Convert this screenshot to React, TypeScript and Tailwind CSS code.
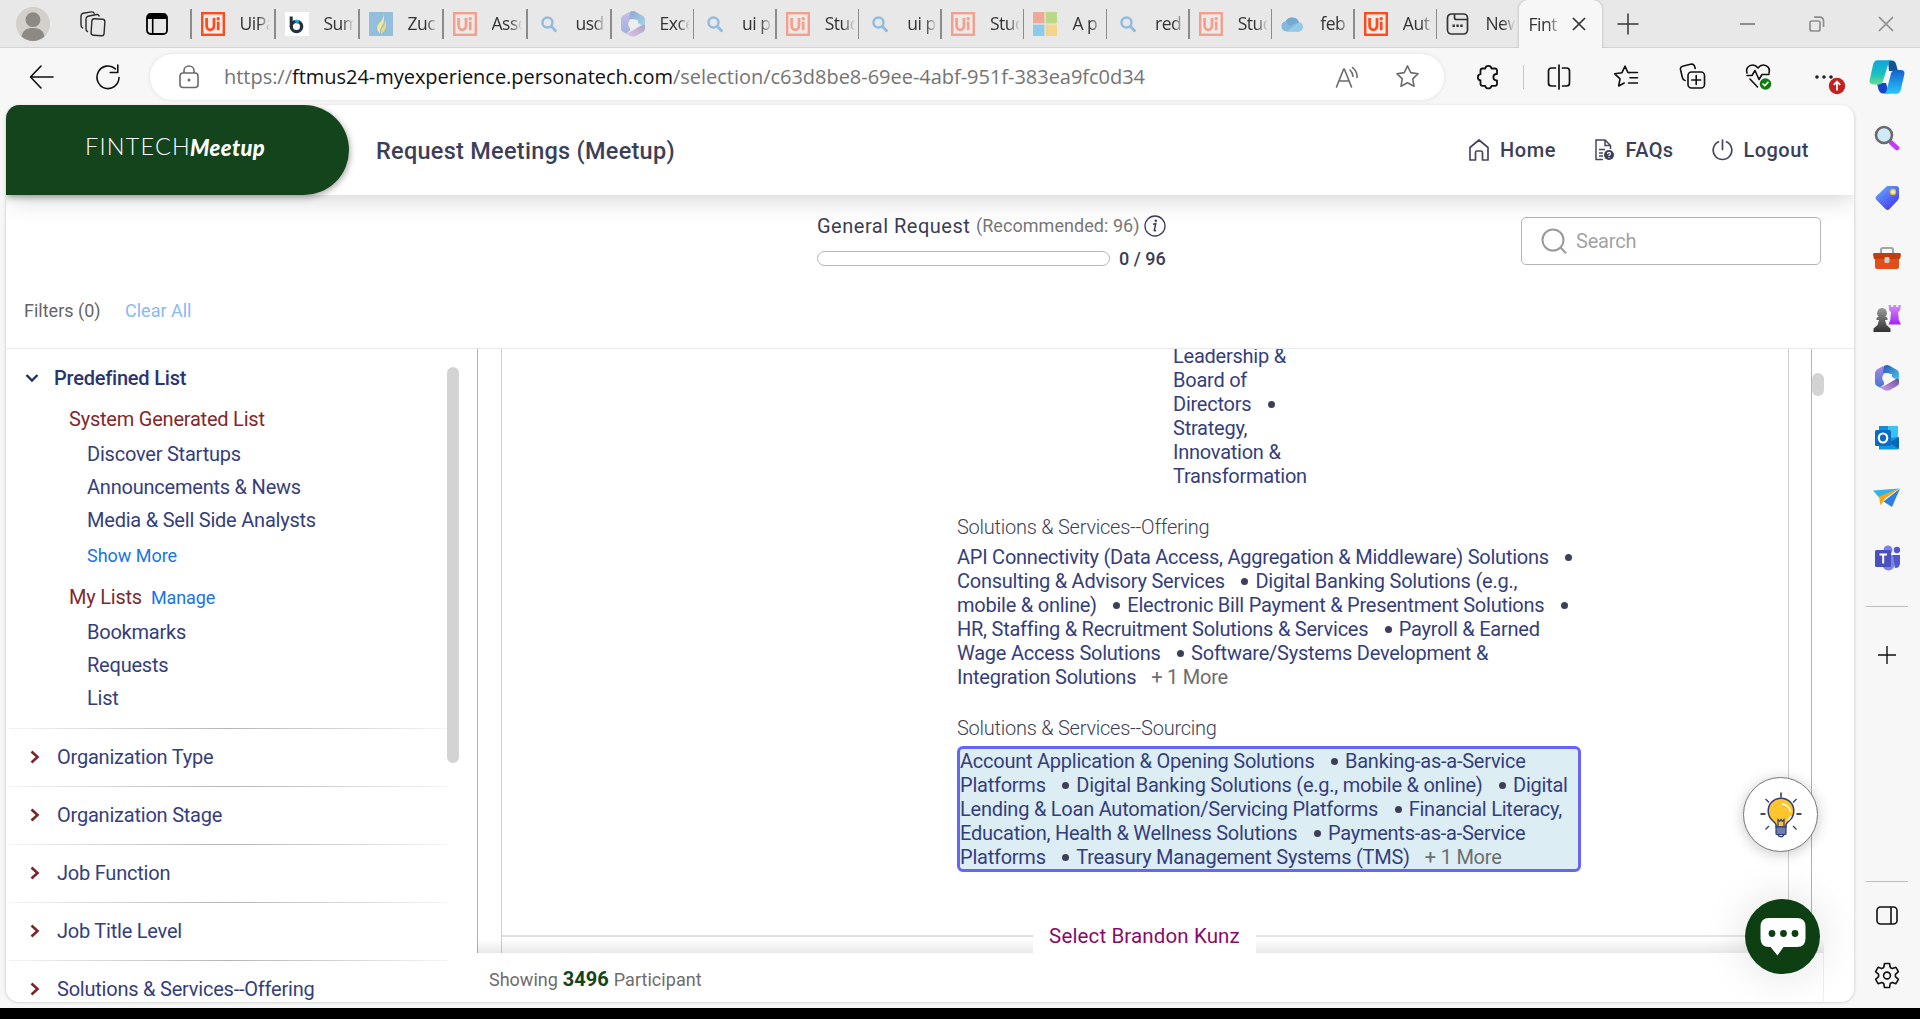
import React from "react";

/* ---------- Favicons ---------- */

function UiPath() {
  return (
    <svg width="24" height="24" viewBox="0 0 24 24">
      <rect width="24" height="24" fill="#ff4a1c" />
      <rect x="2.4" y="2.4" width="19.2" height="19.2" fill="#f3ece9" />
      <path d="M5.6 6v7.6c0 5.6 7.4 5.6 7.4 0V6" fill="none" stroke="#ff4a1c" strokeWidth="2.7" />
      <path d="M17.2 9.6v8.6" stroke="#ff4a1c" strokeWidth="2.7" />
      <circle cx="17.2" cy="6.7" r="1.7" fill="#ff4a1c" />
    </svg>
  );
}

function SumIcon() {
  return (
    <svg width="24" height="24" viewBox="0 0 24 24">
      <rect width="24" height="24" fill="#fff" />
      <path d="M6.2 4.500v10" stroke="#25303f" strokeWidth="3" />
      <circle cx="11.500" cy="14.500" r="5.200" fill="none" stroke="#25303f" strokeWidth="3.300" />
      <path d="M9.500 8h5l-1.500 3.500h-2z" fill="#18a6dd" />
    </svg>
  );
}

function Flame() {
  return (
    <svg width="24" height="24" viewBox="0 0 24 24">
      <rect width="24" height="24" fill="#93bfdc" />
      <path d="M13.500 1.500c1.500 3 .5 6-2.500 9s-4.500 6 0 11c-.5-4 1-6 2.500-8.500s2.500-7.500 0-11.500z" fill="#f7e796" />
      <path d="M15.500 6.500c1 3 .5 5-1 7.500s-2.500 4.500-2.500 8c3.500-2.500 5-5.500 5-8.500 0-2.700-.5-5-1.500-7z" fill="#f5d96f" />
    </svg>
  );
}

function BlueSearch() {
  return (
    <svg width="24" height="24" viewBox="0 0 24 24" fill="none" stroke="#8fbce0" strokeLinecap="round">
      <circle cx="10.500" cy="10.500" r="5" strokeWidth="2.400" />
      <path d="M14.500 14.500l4 4.300" strokeWidth="2.800" />
    </svg>
  );
}

function M365({ id }: { id: string }) {
  return (
    <svg width="26" height="28" viewBox="0 0 26 28">
      <defs>
        <linearGradient id={id + "a"} x1="0" y1="0" x2="0" y2="1">
          <stop offset="0" stopColor="#a987dd" />
          <stop offset="1" stopColor="#3f79d8" />
        </linearGradient>
        <linearGradient id={id + "b"} x1="0" y1="0" x2="1" y2="1">
          <stop offset="0" stopColor="#2a55b5" />
          <stop offset="1" stopColor="#4cc8f0" />
        </linearGradient>
        <linearGradient id={id + "c"} x1="0" y1="1" x2="1" y2="0">
          <stop offset="0" stopColor="#d5a3f3" />
          <stop offset="1" stopColor="#6b4a9c" />
        </linearGradient>
      </defs>
      <path d="M9 2L3 5.500Q1 7 1 9v10q0 2 2 3l3 1.500 4-3V3z" fill={`url(#${id}a)`} />
      <path d="M10 2q3-2 6 0l7 4q2 1 2 3.500V17l-7-4V10l-9-1z" fill={`url(#${id}b)`} />
      <path d="M25 15.500v3.500q0 2-2 3l-7 4q-3 1.600-6 0L4 22.500q4 1 7-1l12-7z" fill={`url(#${id}c)`} />
      <circle cx="13" cy="14" r="4.800" fill="#f7f7f7" />
    </svg>
  );
}

function Microsoft() {
  return (
    <svg width="24" height="24" viewBox="0 0 24 24">
      <rect width="11.400" height="11.400" fill="#efa998" />
      <rect x="12.600" width="11.400" height="11.400" fill="#bdd885" />
      <rect y="12.600" width="11.400" height="11.400" fill="#8bcbec" />
      <rect x="12.600" y="12.600" width="11.400" height="11.400" fill="#f4d58a" />
    </svg>
  );
}

function Cloud() {
  return (
    <svg width="26" height="24" viewBox="0 0 26 24">
      <path d="M6 20a5.500 5.500 0 0 1-1-10.900A8 8 0 0 1 19.500 10a5.200 5.200 0 0 1 .5 10z" fill="#84b9dd" />
      <path d="M5 9.200A8 8 0 0 1 19.500 10L9 14z" fill="#74a9d3" />
      <path d="M6 20L19.500 10a5.200 5.200 0 0 1 .5 10z" fill="#93cae9" />
    </svg>
  );
}

function NewTabIcon() {
  return (
    <svg width="24" height="24" viewBox="0 0 24 24" fill="none" stroke="#333" strokeWidth="1.700">
      <rect x="1.500" y="2" width="20" height="20" rx="4" />
      <path d="M8.500 2v3.500q0 2 2 2h11" />
      <path d="M6.500 13.800h2.400M10.400 13.800h2.400M14.300 13.800h2.400" strokeWidth="2.600" />
    </svg>
  );
}

/* ---------- Tabs ---------- */

const dim = (n: React.ReactNode) => <span className="block opacity-45">{n}</span>;

const tabs: { label: string; icon: React.ReactNode; wide?: boolean }[] = [
  { label: "UiPa", icon: <UiPath />, wide: true },
  { label: "Sum", icon: <SumIcon />, wide: true },
  { label: "Zuc", icon: <Flame />, wide: true },
  { label: "Asso", icon: dim(<UiPath />), wide: true },
  { label: "usd", icon: <BlueSearch />, wide: true },
  { label: "Exce", icon: dim(<M365 id="tab" />) },
  { label: "ui p", icon: <BlueSearch /> },
  { label: "Stud", icon: dim(<UiPath />) },
  { label: "ui p", icon: <BlueSearch /> },
  { label: "Stud", icon: dim(<UiPath />) },
  { label: "A p", icon: <Microsoft /> },
  { label: "red", icon: <BlueSearch /> },
  { label: "Stud", icon: dim(<UiPath />) },
  { label: "feb", icon: <Cloud /> },
  { label: "Aut", icon: <UiPath /> },
  { label: "New", icon: <NewTabIcon /> },
];

function Fade({ children }: { children: React.ReactNode }) {
  return (
    <span className="block overflow-hidden whitespace-nowrap text-[17.5px] leading-[24px] tracking-[-0.5px] text-[#333] [mask-image:linear-gradient(to_right,black_60%,transparent)]">
      {children}
    </span>
  );
}

function TabBar() {
  return (
    <div className="flex h-12 border-b border-[#d2d2d2] bg-[#e8e8e8]">
      <div className="flex w-[190px] shrink-0 items-center">
        <svg className="ml-4" width="34" height="34" viewBox="0 0 34 34">
          <circle cx="17" cy="17" r="17" fill="#d3d0cc" />
          <circle cx="17" cy="12.700" r="7.400" fill="#8d8a86" />
          <path d="M5.500 29.500c1-6 5-8.500 11.500-8.500s10.500 2.500 11.500 8.500a17 17 0 0 1-23 0z" fill="#8d8a86" />
        </svg>
        <svg className="ml-[30px]" width="26" height="26" viewBox="0 0 26 26" fill="none" stroke="#2b2b2b" strokeWidth="1.400" strokeLinejoin="round" strokeLinecap="round">
          <rect x="11.500" y="8" width="13" height="16.500" rx="2.500" transform="rotate(4 18 16)" />
          <path d="M7.500 20.500q-1.500-.6-1.500-2.500V8q0-2.200 2-2.700l8.500-1.800q2-.3 2.600 1.500" />
          <path d="M2.600 17Q1 16 1 14V5q0-2.200 2-2.700L11.600.900q2-.2 2.600 1.300" />
        </svg>
        <svg className="ml-[40px]" width="22" height="22" viewBox="0 0 22 22">
          <rect x="1" y="1" width="20" height="20" rx="3.500" fill="none" stroke="#000" strokeWidth="1.800" />
          <path d="M1 6V4.500Q1 1 4.500 1h13Q21 1 21 4.500V6z" fill="#000" />
          <path d="M6.700 6v15" stroke="#000" strokeWidth="1.600" />
        </svg>
      </div>
      {tabs.map((t, i) => (
        <div key={i} className={`flex shrink-0 items-center ${t.wide ? "w-[84px]" : "w-[82.6px]"}`}>
          <div className="h-[30px] w-[1.5px] shrink-0 bg-[#8c8c8c]" />
          <div className="ml-[9px] flex w-6 shrink-0 justify-center">{t.icon}</div>
          <div className="mb-px ml-[15px] w-[30px] overflow-hidden">
            <Fade>{t.label}</Fade>
          </div>
        </div>
      ))}
      <div className="-mb-px flex w-[83px] shrink-0 items-center rounded-t-[9px] bg-[#f7f7f7] pl-[10px] shadow-[0_0_3px_rgba(0,0,0,0.25)] [clip-path:inset(0_-4px_0_-4px)]">
        <div className="mb-px w-[32px] overflow-hidden">
          <Fade>Fint</Fade>
        </div>
        <svg className="ml-[11px]" width="14" height="14" viewBox="0 0 14 14" stroke="#333" strokeWidth="1.700">
          <path d="M1 1l12 12M13 1L1 13" />
        </svg>
      </div>
      <div className="flex flex-1 items-center">
        <svg className="ml-[15px]" width="22" height="22" viewBox="0 0 22 22" stroke="#333" strokeWidth="1.500">
          <path d="M11 .5v21M.5 11h21" />
        </svg>
        <div className="ml-[101px] h-[2px] w-[15px] bg-[#8d8d8d]" />
        <svg className="ml-[54px]" width="16" height="16" viewBox="0 0 16 16" fill="none" stroke="#8d8d8d" strokeWidth="1.700">
          <rect x="1" y="5" width="10" height="10" rx="2" />
          <path d="M5 1.200h5.500q4 0 4 4V11" />
        </svg>
        <svg className="ml-[53px]" width="16" height="16" viewBox="0 0 16 16" stroke="#8d8d8d" strokeWidth="1.700">
          <path d="M1 1l14 14M15 1L1 15" />
        </svg>
      </div>
    </div>
  );
}

/* ---------- Toolbar ---------- */

function Cell({ w, children }: { w: string; children: React.ReactNode }) {
  return <div className={`flex shrink-0 items-center justify-center ${w}`}>{children}</div>;
}

const line = {
  fill: "none",
  stroke: "#111",
  strokeWidth: 1.6,
  strokeLinecap: "round" as const,
  strokeLinejoin: "round" as const,
};

const STAR = "M12 1.800l3.100 6.500 7.100 1-5.200 5 1.300 7.100L12 18l-6.300 3.400L7 14.300l-5.200-5 7.100-1z";

function Toolbar() {
  return (
    <div className="flex h-[57px] items-center bg-[#f7f7f7]">
      <div className="flex w-[150px] shrink-0">
        <svg className="ml-[29px]" width="26" height="26" viewBox="0 0 26 26" {...line}>
          <path d="M1.500 13H24M12 2L1.500 13 12 24" />
        </svg>
        <svg className="ml-[40px]" width="26" height="26" viewBox="0 0 26 26" {...line}>
          <path d="M24 13.500a11 11.300 0 1 1-3.600-8.600M22.800 1v7.500h-7.600" />
        </svg>
      </div>
      <div className="flex h-[46px] w-[1294px] shrink-0 items-center rounded-full bg-white shadow-[0_0_5px_rgba(0,0,0,0.09)]">
        <svg className="ml-[29px]" width="20" height="24" viewBox="0 0 20 24" fill="none" stroke="#6a6a6a" strokeWidth="1.600">
          <rect x="1" y="8" width="18" height="14.500" rx="3" />
          <path d="M5 8V5.500a5 4.500 0 0 1 10 0V8" />
          <circle cx="10" cy="15" r="1.500" fill="#6a6a6a" stroke="none" />
        </svg>
        <div className="ml-[25px] w-[940px] shrink-0 whitespace-nowrap text-[20px] leading-[28px] tracking-[-0.03px] text-[#747474]">
          https://<span className="text-[#111]">ftmus24-myexperience.personatech.com</span>/selection/c63d8be8-69ee-4abf-951f-383ea9fc0d34
        </div>
        <svg className="ml-[171px] shrink-0" width="25" height="24" viewBox="0 0 25 24" {...line} stroke="#6a6a6a">
          <path d="M1.500 22L8.700 4h.6l7.200 18M4 16h10M15 5q3 3 3 6.500M17.500 2.500q5 4 4.500 10" />
        </svg>
        <svg className="ml-[35px] shrink-0" width="25" height="25" viewBox="0 0 24 24" {...line} stroke="#6a6a6a" strokeWidth={1.5}>
          <path d={STAR} />
        </svg>
      </div>
      <Cell w="w-[86px]">
        <svg className="ml-[3px]" width="24" height="26" viewBox="0 0 24 26" {...line} strokeWidth={1.8}>
          <path d="M5.500 4.500h2.700a3.200 3.200 0 0 1 6.300 0h3.500q2 0 2 2v3.500h-1a3.200 3.200 0 0 0 0 6.300h1v3.500q0 2-2 2h-3.500a3.200 3.200 0 0 1-6.300 0H5.500q-2 0-2-2v-3.300a3.200 3.200 0 0 1 0-6.300V6.500q0-2 2-2z" />
        </svg>
      </Cell>
      <div className="-ml-[7px] h-6 w-px shrink-0 bg-[#c8c8c8]" />
      <Cell w="w-[70px]">
        <svg width="24" height="26" viewBox="0 0 24 26" {...line} strokeWidth={1.7}>
          <path d="M8.500 4H4.500Q1.500 4 1.500 7v12q0 3 3 3h4M15.500 4h4q3 0 3 3v12q0 3-3 3h-4M12 1v24" />
        </svg>
      </Cell>
      <Cell w="w-[64px]">
        <svg width="26" height="25" viewBox="0 0 26 25" {...line}>
          <path d="M16.500 8.700L14.900 8.500 12 2.200 8.900 8.800l-7.100 1 5.200 5L5.700 22l5.500-3M15.500 8.500h9M17 13.800h7.500M15.500 19h9" />
        </svg>
      </Cell>
      <Cell w="w-[68px]">
        <svg width="27" height="27" viewBox="0 0 27 27" {...line}>
          <rect x="9" y="9" width="16.500" height="16" rx="3.500" />
          <path d="M17.200 12.500v9M12.700 17h9M6 17.500Q4 17 3.500 15L1.500 6.500Q1 4 3.500 3.300l8-2Q14.500.600 15.500 3l.7 2.500" />
        </svg>
      </Cell>
      <Cell w="w-[64px]">
        <svg className="ml-0.5" width="28" height="27" viewBox="0 0 28 27" {...line}>
          <path d="M2 10C0 3 8.500-1 13 5c4.500-6 13-2 11 5M2 12.500h5l3-5 4 9 3-5h7M5 16l7.500 8" />
          <circle cx="20.500" cy="21" r="5.800" fill="#107c10" stroke="none" />
          <path d="M18 21l1.800 1.800 3.200-3.500" stroke="#fff" />
        </svg>
      </Cell>
      <Cell w="w-[70px]">
        <svg className="mt-[14px] ml-[9px]" width="32" height="32" viewBox="0 0 32 32">
          <circle cx="3" cy="9" r="1.800" fill="#222" />
          <circle cx="10" cy="9" r="1.800" fill="#222" />
          <circle cx="17" cy="9" r="1.800" fill="#222" />
          <circle cx="23" cy="18" r="8.200" fill="#c42020" />
          <path d="M23 22.500v-8.500M19.800 16.800l3.200-3.200 3.200 3.200" stroke="#fff" strokeWidth="1.800" fill="none" />
        </svg>
      </Cell>
      <div className="flex flex-1 justify-center pr-[6px]">
        <svg width="36" height="34" viewBox="0 0 36 34">
          <defs>
            <linearGradient id="cpa" x1="0" y1="0" x2="0" y2="1">
              <stop offset="0" stopColor="#12a5dc" />
              <stop offset=".55" stopColor="#16bfc2" />
              <stop offset="1" stopColor="#67dd8a" />
            </linearGradient>
            <linearGradient id="cpb" x1="0" y1="0" x2="0" y2="1">
              <stop offset="0" stopColor="#1760d0" />
              <stop offset="1" stopColor="#25c8f8" />
            </linearGradient>
          </defs>
          <path d="M19 .5h4q3 0 4 3.500l2 7h-9z" fill="#0e5795" />
          <path d="M8 23h9l3 10.500h-6q-3 0-4.500-4z" fill="#1546c8" />
          <path d="M8.500.300H23q-2.500 0-3.500 3L14 21q-1 3.500-4.500 3.500H4.500q-5 0-3.700-5L4 5q1-4.700 4.500-4.700z" fill="url(#cpa)" />
          <path d="M27.500 33.700H14q2.500 0 3.500-3L22 13.500q1-3.500 4.500-3.500h5q5 0 3.700 5L32 29q-1 4.700-4.500 4.700z" fill="url(#cpb)" />
        </svg>
      </div>
    </div>
  );
}

/* ---------- Page header ---------- */

function Header() {
  return (
    <div className="relative z-20 flex h-[90px] shrink-0 items-center bg-white font-medium text-[#3d3f58] shadow-[0_2px_26px_rgba(0,0,0,0.2)]">
      <div className="flex h-[90px] w-[343px] shrink-0 items-center rounded-r-[45px] bg-[#13441c] pb-[6px] pl-[79px] text-white shadow-[1px_2px_6px_rgba(0,0,0,0.35)]">
        <span className="font-['Lato'] text-[23.5px] font-light tracking-[1.2px]">FINTECH</span>
        <span className="-ml-px font-['Lato'] text-[22px] font-black italic tracking-[0.4px]">Meetup</span>
      </div>
      <h1 className="mt-[3px] ml-[27px] w-[1093px] shrink-0 whitespace-nowrap text-[23.5px] font-medium tracking-[0.27px]">Request Meetings (Meetup)</h1>
      <div className="flex w-[126px] shrink-0 items-center text-[20px]">
        <svg width="20" height="22" viewBox="0 0 20 22" fill="none" stroke="#45475f" strokeWidth="1.700" strokeLinejoin="round">
          <path d="M1 8.500L10 1l9 7.500V21h-5.500v-7.500q0-1.500-1.500-1.500H8q-1.500 0-1.500 1.500V21H1z" />
        </svg>
        <span className="ml-[11px] tracking-[0.6px]">Home</span>
      </div>
      <div className="flex w-[117px] shrink-0 items-center text-[20px]">
        <svg width="20" height="22" viewBox="0 0 20 22" fill="none" stroke="#45475f" strokeWidth="1.500">
          <path d="M8 20.500H1V1h9l5.500 5.500V10M10 1v5.500h5.500M4 10.500h6M4 14h4M4 17h4" />
          <circle cx="14" cy="16" r="5" fill="#3d3f58" stroke="none" />
          <path d="M12.500 15q0-1.600 1.500-1.600t1.500 1.400q0 .9-1.500 1.500v.700M14 18v1" stroke="#fff" strokeWidth="1.200" />
        </svg>
        <span className="ml-[10.5px] tracking-[0.4px]">FAQs</span>
      </div>
      <div className="flex shrink-0 items-center text-[20px]">
        <svg width="21" height="22" viewBox="0 0 21 22" fill="none" stroke="#45475f" strokeWidth="1.700" strokeLinecap="round">
          <path d="M6.500 2.800a9.300 9.300 0 1 0 8 0M10.500 1v9.500" />
        </svg>
        <span className="ml-[10.5px] tracking-[0.45px]">Logout</span>
      </div>
    </div>
  );
}

function RequestBar() {
  return (
    <div className="flex h-[154px] shrink-0 border-b border-[#e9e9e9]">
      <div className="flex w-[811px] shrink-0 items-end pb-[25px] pl-[18px] text-[18px] leading-6">
        <span className="w-[101px] text-[#666]">Filters (0)</span>
        <span className="text-[#8bb8f8]">Clear All</span>
      </div>
      <div className="w-[704px] shrink-0">
        <div className="mt-[19px] flex items-center leading-6">
          <span className="w-[159px] text-[20px] tracking-[0.5px] text-[#3a3c55]">General Request</span>
          <span className="w-[169px] whitespace-nowrap text-[18px] tracking-[0.05px] text-[#777]">(Recommended: 96)</span>
          <svg className="-ml-px" width="22" height="22" viewBox="0 0 22 22">
            <circle cx="11" cy="11" r="10" fill="none" stroke="#3a3c55" strokeWidth="1.300" />
            <path d="M9 9.300l2.700-.5-1.400 6.500q0 1 1.800.1" fill="none" stroke="#3a3c55" strokeWidth="1.500" />
            <circle cx="11.800" cy="5.800" r="1.200" fill="#3a3c55" />
          </svg>
        </div>
        <div className="mt-[8px] flex h-6 items-center">
          <div className="h-[15px] w-[293px] rounded-full border border-[#b4b8b0] bg-white" />
          <span className="ml-[9px] text-[18px] font-medium text-[#3a3c55]">0 / 96</span>
        </div>
      </div>
      <div className="mt-[22px] flex h-[48px] w-[300px] items-center rounded-[5px] border border-[#b5b5b5] bg-white pl-[19px]">
        <svg width="27" height="27" viewBox="0 0 27 27" fill="none" stroke="#9a9a9a" strokeWidth="2">
          <circle cx="12" cy="12" r="10.500" />
          <path d="M19.500 19.500l5.500 5.700" />
        </svg>
        <span className="ml-[8px] text-[20px] tracking-[-0.2px] text-[#a3a3a3]">Search</span>
      </div>
    </div>
  );
}

/* ---------- Filters ---------- */

function Sub({ children }: { children: React.ReactNode }) {
  return <div className="flex h-[33px] items-center pl-[81px]">{children}</div>;
}

function Filters() {
  return (
    <div className="flex w-[471px] shrink-0 overflow-hidden text-[20px] tracking-[-0.22px] text-[#353e7c]">
      <div className="w-[441px] shrink-0 whitespace-nowrap">
        <div className="flex h-[58px] items-center pl-[19px]">
          <svg width="14" height="10" viewBox="0 0 14 10" fill="none" stroke="#25306b" strokeWidth="2.400">
            <path d="M1.500 2L7 7.500 12.500 2" />
          </svg>
          <span className="ml-[15px] font-medium text-[#2a3470]">Predefined List</span>
        </div>
        <div className="h-6 pl-[63px] leading-6 text-[#80292c]">System Generated List</div>
        <div className="mt-[6.5px]">
          <Sub>Discover Startups</Sub>
          <Sub>Announcements &amp; News</Sub>
          <Sub>Media &amp; Sell Side Analysts</Sub>
        </div>
        <div className="flex h-9 items-center pt-[2px] pl-[81px] text-[18px] tracking-[-0.02px] text-[#1a73e8]">Show More</div>
        <div className="mt-[6px] flex h-[37px] items-center pl-[63px]">
          <span className="text-[#80292c]">My Lists</span>
          <span className="mt-px ml-[9px] text-[18px] tracking-[-0.1px] text-[#1a73e8]">Manage</span>
        </div>
        <Sub>Bookmarks</Sub>
        <Sub>Requests</Sub>
        <Sub>List</Sub>
        <div className="h-[13.5px]" />
        {["Organization Type", "Organization Stage", "Job Function", "Job Title Level", "Solutions & Services--Offering"].map((t) => (
          <div key={t}>
            <div className="ml-[3px] h-px bg-linear-to-r from-[#f4f4f4] via-[#b5b5b5] to-[#f4f4f4]" />
            <div className="flex h-[57px] items-center pb-[2px] pl-[24px]">
              <svg width="10" height="14" viewBox="0 0 10 14" fill="none" stroke="#7c2427" strokeWidth="2.600">
                <path d="M1.500 1.500L7.500 7l-6 5.500" />
              </svg>
              <span className="ml-[17px]">{t}</span>
            </div>
          </div>
        ))}
      </div>
      <div className="mt-[18px] h-[396px] w-3 rounded-full bg-[#d3d3d3]" />
    </div>
  );
}

/* ---------- Participant card ---------- */

const offering: string[][] = [
  ["API Connectivity (Data Access, Aggregation & Middleware) Solutions", ""],
  ["Consulting & Advisory Services", "Digital Banking Solutions (e.g.,"],
  ["mobile & online)", "Electronic Bill Payment & Presentment Solutions", ""],
  ["HR, Staffing & Recruitment Solutions & Services", "Payroll & Earned"],
  ["Wage Access Solutions", "Software/Systems Development &"],
  ["Integration Solutions"],
];

const sourcing: string[][] = [
  ["Account Application & Opening Solutions", "Banking-as-a-Service"],
  ["Platforms", "Digital Banking Solutions (e.g., mobile & online)", "Digital"],
  ["Lending & Loan Automation/Servicing Platforms", "Financial Literacy,"],
  ["Education, Health & Wellness Solutions", "Payments-as-a-Service"],
  ["Platforms", "Treasury Management Systems (TMS)"],
];

function Lines({ rows }: { rows: string[][] }) {
  return (
    <div className="whitespace-nowrap leading-6">
      {rows.map((r, i) => (
        <div key={i} className="flex h-6">
          {r.map((s, j) => (
            <React.Fragment key={j}>
              {j > 0 && (
                <span className="flex w-[30.5px] shrink-0 items-center pl-[16.5px]">
                  <span className="size-[7px] shrink-0 rounded-full bg-[#3d3f58]" />
                </span>
              )}
              {s && <span>{s}</span>}
            </React.Fragment>
          ))}
          {i === rows.length - 1 && <span className="ml-[15px] text-[#6d6d6d]">+ 1 More</span>}
        </div>
      ))}
    </div>
  );
}

function Participants() {
  return (
    <div className="relative flex h-[604px] shrink-0 overflow-hidden">
      <div className="w-px shrink-0 bg-[#7cc4ee]" />
      <div className="ml-[23px] w-[1288px] shrink-0 border-x border-[#cfcfcf]">
        <div className="-mt-[5px] ml-[455px] w-[624px] text-[20px] tracking-[-0.24px] text-[#353e7c]">
          <div className="ml-[216px] whitespace-nowrap leading-6">
            <div>Leadership &amp;</div>
            <div>Board of</div>
            <div className="flex items-center">
              Directors
              <span className="ml-[17px] size-[7px] rounded-full bg-[#3d3f58]" />
            </div>
            <div>Strategy,</div>
            <div>Innovation &amp;</div>
            <div>Transformation</div>
          </div>
          <div className="mt-[27px] mb-[6px] h-6 font-light leading-6 text-[#3d3f58]">Solutions &amp; Services--Offering</div>
          <Lines rows={offering} />
          <div className="mt-[27px] mb-[6px] h-6 font-light leading-6 text-[#3d3f58]">Solutions &amp; Services--Sourcing</div>
          <div className="rounded-[6px] border-3 border-[#6466f8] bg-[#dcedf4]">
            <Lines rows={sourcing} />
          </div>
        </div>
        <div className="mt-[52px] flex h-10 items-start">
          <div className="mt-[11px] h-[2px] w-[531px] bg-[#e0e0e0]" />
          <div className="relative z-10 flex h-10 w-[223px] justify-center bg-white text-[20.5px] leading-6 tracking-[0.13px] text-[#8a0a68]">Select Brandon Kunz</div>
          <div className="mt-[11px] h-[2px] flex-1 bg-[#e6e6e6]" />
        </div>
      </div>
      <div className="ml-[22px] w-px shrink-0 bg-[#7cc4ee]" />
      <div className="mt-[24px] h-[23px] w-3 rounded-full bg-[#d3d3d3]" />
      <div className="absolute bottom-0 left-0 h-[14px] w-[1347px] bg-linear-to-t from-black/9 to-transparent" />
    </div>
  );
}

/* ---------- Edge sidebar ---------- */

const sideIcons: React.ReactNode[] = [
  <svg key="s" width="26" height="26" viewBox="0 0 26 26">
    <path d="M17 17.500l6 5.500" stroke="#c03cf8" strokeWidth="4.600" strokeLinecap="round" />
    <circle cx="10" cy="10" r="8" fill="#d0e9f8" stroke="#6a6a6a" strokeWidth="2.600" />
  </svg>,
  <svg key="t" width="26" height="26" viewBox="0 0 26 26">
    <defs>
      <linearGradient id="tag" x1="0" y1="0" x2=".8" y2="1">
        <stop offset="0" stopColor="#6bb4fb" />
        <stop offset="1" stopColor="#4232f2" />
      </linearGradient>
    </defs>
    <path d="M13 1h9q3 0 3 3v8q0 2-1.500 3.500l-8 8.500q-2 2-4 0l-9-9q-2-2 0-4z" fill="url(#tag)" />
    <circle cx="19" cy="7" r="2.400" fill="#fff" stroke="#f0c42a" strokeWidth="1.600" />
  </svg>,
  <svg key="b" width="28" height="26" viewBox="0 0 28 26">
    <path d="M8 9V5q0-2 2-2h8q2 0 2 2v4" fill="none" stroke="#a5a5a5" strokeWidth="2.200" />
    <rect x="2" y="10" width="24" height="14" rx="2" fill="#de4f1c" />
    <path d="M1.500 8h25q1.500 0 1.500 1.500L27 14H1L0 9.500Q0 8 1.500 8z" fill="#c53b10" />
    <rect x="11.500" y="12" width="5" height="6" rx="1.500" fill="#cdcdcd" />
  </svg>,
  <svg key="c" width="28" height="28" viewBox="0 0 28 28">
    <defs>
      <linearGradient id="rook" x1="0" y1="0" x2="0" y2="1">
        <stop offset="0" stopColor="#d68bff" />
        <stop offset="1" stopColor="#a224f4" />
      </linearGradient>
      <linearGradient id="pawn" x1="0" y1="0" x2="0" y2="1">
        <stop offset="0" stopColor="#9a9a9a" />
        <stop offset="1" stopColor="#303030" />
      </linearGradient>
    </defs>
    <path d="M15.500 1h2.500v2h2.200V1h3v2h2.200V1H28l-1 5.500-1.800 1.500.6 8 2.200 4.500H15.500l1.800-4.500.7-8-1.700-1.500z" fill="url(#rook)" />
    <path d="M9 4a5 5 0 0 1 3.300 8.600L14.500 14v2H12l1.500 5 4 3.500V28H.500v-3.500l4-3.500L6 16H3.500v-2l2.200-1.400A5 5 0 0 1 9 4z" fill="url(#pawn)" />
  </svg>,
  <M365 key="m" id="side" />,
  <svg key="o" width="26" height="26" viewBox="0 0 26 26">
    <rect x="5" y="1" width="19" height="16" fill="#37c4f5" />
    <path d="M5 1h9v7H5z" fill="#1b8ad6" />
    <path d="M24.500 12v12.500H5V14z" fill="#1493df" />
    <path d="M15 17.500l10-5.500v12z" fill="#0d66b5" />
    <rect x="1" y="5" width="16" height="16" rx="1.500" fill="#0b6cc4" />
    <ellipse cx="9" cy="13" rx="4.200" ry="4.500" fill="none" stroke="#fff" strokeWidth="2.200" />
  </svg>,
  <svg key="p" width="28" height="22" viewBox="0 0 28 22">
    <path d="M0 3.500L26.500 1.500 6 10.500z" fill="#35b2ea" />
    <path d="M27 1.500L19 20l-8.500-5.500z" fill="#2c7fe6" />
    <path d="M26.500 1.500L6 9.500l1.500 9L12 11.500z" fill="#f4a613" />
  </svg>,
  <svg key="w" width="26" height="26" viewBox="0 0 26 26">
    <circle cx="14" cy="5" r="4.500" fill="#7b83eb" />
    <circle cx="23" cy="5" r="3.200" fill="#5059c9" />
    <path d="M8 10h13v9a6.500 6.500 0 0 1-13 0z" fill="#7b83eb" />
    <path d="M19 10h7v8q0 5-5 5z" fill="#5059c9" />
    <rect x="1" y="5" width="16" height="17" rx="1.500" fill="#4a50bd" />
    <path d="M5.500 9.500h7.500M9.200 9.500v9" stroke="#fff" strokeWidth="2" />
  </svg>,
];

function EdgeSidebar() {
  return (
    <div className="flex w-[65px] shrink-0 flex-col items-center bg-[#f7f7f7] pt-[3px] pr-[2px]">
      {sideIcons.map((n, i) => (
        <div key={i} className="flex h-[60px] shrink-0 items-center justify-center">
          {n}
        </div>
      ))}
      <div className="mt-[18px] h-px w-[42px] shrink-0 bg-[#bdbdbd]" />
      <svg className="mt-[39px] shrink-0" width="18" height="18" viewBox="0 0 18 18" stroke="#111" strokeWidth="1.400">
        <path d="M9 0v18M0 9h18" />
      </svg>
      <div className="mt-[217px] h-px w-[42px] shrink-0 bg-[#bdbdbd]" />
      <svg className="mt-[24px] shrink-0" width="22" height="19" viewBox="0 0 22 19" fill="none" stroke="#111" strokeWidth="1.600">
        <rect x="1" y="1" width="20" height="17" rx="3.500" />
        <path d="M15 1v17" />
      </svg>
      <svg className="mt-[37px] shrink-0" width="26" height="27" viewBox="0 0 26 27" fill="none" stroke="#111" strokeWidth="1.600" strokeLinejoin="round">
        <path d="M10.500 1.500h5l.8 4 1.900 1.100 3.700-1.300 2.500 4.400-3 2.700v2.200l3 2.700-2.500 4.400-3.700-1.300-1.900 1.100-.8 4h-5l-.8-4-1.900-1.100-3.700 1.300-2.500-4.400 3-2.700v-2.200l-3-2.700 2.500-4.400 3.700 1.300 1.900-1.100z" />
        <circle cx="13" cy="13.500" r="3.400" />
      </svg>
    </div>
  );
}

/* ---------- Floating buttons ---------- */

function Bulb() {
  return (
    <svg width="42" height="46" viewBox="0 0 42 46" fill="none">
      <path d="M21 .5v5M.5 22h5M36.500 22h5" stroke="#111" strokeWidth="1.300" />
      <path d="M5.500 7l3.500 3.500M36.500 7L33 10.500M5.500 37.500L9 34M36.500 37.500L33 34" stroke="#2e3a7c" strokeWidth="1.300" />
      <path d="M16 35v-2.500q-1-2-3.500-4a12.800 12.800 0 1 1 17 0q-2.500 2-3.500 4V35z" fill="#fec52e" stroke="#2e3a7c" strokeWidth="1.500" />
      <path d="M22 12a9.500 9.500 0 0 1 8.500 8M31 24q-1 3-3.500 4.500" stroke="#fff" strokeWidth="1.400" />
      <path d="M18 35v-7.500l1.800 1.800 1.200-2 1.200 2 1.800-1.800V35" stroke="#2e3a7c" strokeWidth="1.200" />
      <rect x="16" y="35" width="10" height="7.500" rx="1" fill="#6d7cab" stroke="#2e3a7c" strokeWidth="1.200" />
      <path d="M18 43q3 3.500 6 0" stroke="#2e3a7c" strokeWidth="1.400" />
    </svg>
  );
}

function FloatingButtons() {
  return (
    <>
      <div className="absolute top-[672px] left-[1737px] z-30 flex size-[75px] items-center justify-center rounded-full border border-[#777] bg-white shadow-[0_2px_14px_rgba(0,0,0,0.22)]">
        <Bulb />
      </div>
      <div className="absolute top-[794px] left-[1739px] z-30 flex size-[75px] items-center justify-center rounded-full bg-[#0d3f13] shadow-[0_0_46px_rgba(0,0,0,0.13)]">
        <svg width="46" height="40" viewBox="0 0 46 40">
          <path d="M9 1h28q8.500 0 8.500 8.500v12q0 8.500-8.500 8.500H23.500L17.500 38.500 10.500 30H9Q.5 30 .5 21.500v-12Q.5 1 9 1z" fill="#fff" />
          <circle cx="12" cy="16.500" r="3.400" fill="#0d3f13" />
          <circle cx="23.500" cy="16.500" r="3.400" fill="#0d3f13" />
          <circle cx="35" cy="16.500" r="3.400" fill="#0d3f13" />
        </svg>
      </div>
    </>
  );
}

export default function App() {
  return (
    <div className="flex h-[1019px] w-[1920px] flex-col overflow-hidden bg-black font-['Open_Sans',sans-serif]">
      <TabBar />
      <Toolbar />
      <div className="flex h-[903px] bg-[#f7f7f7]">
        <div className="relative ml-[5px] flex h-[898px] w-[1850px] shrink-0 flex-col overflow-hidden rounded-[14px] border border-t-0 border-[#e0e0e0] bg-white font-['Roboto',sans-serif] shadow-[0_0_3px_rgba(0,0,0,0.1)]">
          <Header />
          <RequestBar />
          <div className="flex min-h-0 flex-1">
            <Filters />
            <div className="flex-1">
              <Participants />
              <div className="flex h-[50px] w-[1347px] items-center border-r border-[#efefef] bg-white pt-[2px] pl-[12px] text-[18px] text-[#6d6d6d]">
                <span>Showing</span>
                <span className="mx-[5px] text-[20px] font-bold text-[#13441c]">3496</span>
                <span className="tracking-[0.05px]">Participant</span>
              </div>
            </div>
          </div>
          <FloatingButtons />
        </div>
        <EdgeSidebar />
      </div>
    </div>
  );
}
